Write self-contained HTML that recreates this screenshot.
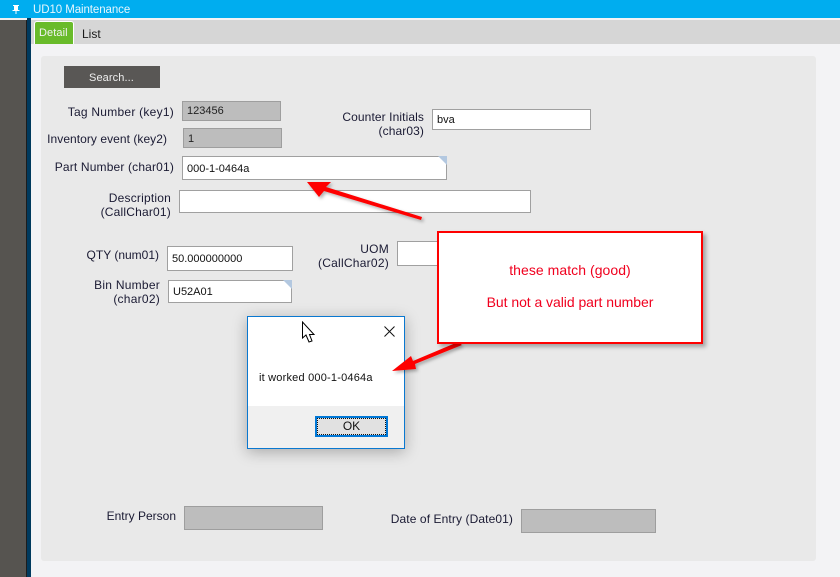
<!DOCTYPE html>
<html><head><meta charset="utf-8">
<style>
html,body{margin:0;padding:0}
body{width:840px;height:577px;overflow:hidden;position:relative;background:#f3f3f5;font-family:"Liberation Sans",Arial,sans-serif;font-size:12px;color:#1a1a33}
div{position:absolute;box-sizing:border-box}
.l{white-space:nowrap;text-align:right;line-height:14px;font-size:12px;letter-spacing:.16px}
.i{border:1px solid #a0a0a0;background:#fff;font-size:11px;line-height:20px;padding-left:4px;color:#111;white-space:nowrap}
.g{background:#bdbdbd;border:1px solid #9e9e9e}
.c{width:0;height:0;border-top:9px solid #b3c8e0;border-left:9px solid transparent;right:-1px;top:-1px}
</style></head><body>
<div style="left:0;top:0;width:840px;height:18px;background:#00adef"></div>
<div style="left:0;top:20px;width:26px;height:557px;background:#565450"></div>
<div style="left:0;top:18px;width:31px;height:2px;background:#f0f0f0"></div>
<div style="left:26px;top:20px;width:1px;height:557px;background:#1d1d1d"></div>
<div style="left:27px;top:18px;width:4px;height:559px;background:#003a5e"></div>
<svg style="position:absolute;left:12px;top:4px" width="8" height="10" viewBox="0 0 8 10"><path d="M1 1h6v1H6v4h1.500v1H4.500v3h-1V7H.5V6H2V2H1Z" fill="#fff"/></svg>
<div style="left:33px;top:2px;color:#e6f6fd;font-size:11.500px;line-height:14px;white-space:nowrap;letter-spacing:-.08px;padding-top:1px">UD10 Maintenance</div>
<div style="left:31px;top:20px;width:809px;height:24px;background:#d6d6d6"></div>
<div style="left:34px;top:21px;width:40px;height:23px;background:#69bb2a;border:1px solid #fff;border-bottom:none;border-radius:3px 3px 0 0"></div>
<div style="left:39px;top:26px;color:#f2f2f2;font-size:11px;line-height:14px;letter-spacing:.1px">Detail</div>
<div style="left:82px;top:27px;color:#1a1a1a;font-size:12px;line-height:14px">List</div>
<div style="left:41px;top:56px;width:775px;height:505px;background:#e9e9e9;border-radius:3px"></div>
<div style="left:64px;top:66px;width:96px;height:22px;background:#595755;color:#eee;font-size:11px;line-height:24px;text-align:center;letter-spacing:.1px;padding-right:1px">Search...</div>

<div class="l" style="left:40px;width:134px;top:105px;letter-spacing:.25px">Tag Number (key1)</div>
<div class="i g" style="left:182px;top:101px;width:99px;height:20px;line-height:19px;font-size:11px;color:#222">123456</div>
<div class="l" style="left:40px;width:127px;top:132px;letter-spacing:.05px">Inventory event (key2)</div>
<div class="i g" style="left:183px;top:128px;width:99px;height:20px;line-height:20px;color:#222">1</div>
<div class="l" style="left:40px;width:134px;top:160px">Part Number (char01)</div>
<div class="i" style="left:182px;top:156px;width:265px;height:24px;line-height:24px">000-1-0464a<div class="c"></div></div>
<div class="l" style="left:60px;width:111px;top:191px;letter-spacing:.2px">Description<br>(CallChar01)</div>
<div class="i" style="left:179px;top:190px;width:352px;height:23px"></div>
<div class="l" style="left:60px;width:99px;top:248px;letter-spacing:0">QTY (num01)</div>
<div class="i" style="left:167px;top:246px;width:126px;height:25px;line-height:25px">50.000000000</div>
<div class="l" style="left:60px;width:100px;top:278px;letter-spacing:.25px">Bin Number<br>(char02)</div>
<div class="i" style="left:168px;top:280px;width:124px;height:23px;line-height:23px">U52A01<div class="c"></div></div>
<div class="l" style="left:300px;width:124px;top:110px;letter-spacing:.1px">Counter Initials<br>(char03)</div>
<div class="i" style="left:432px;top:109px;width:159px;height:21px;line-height:21px">bva</div>
<div class="l" style="left:300px;width:89px;top:242px;letter-spacing:.25px">UOM<br>(CallChar02)</div>
<div class="i" style="left:397px;top:241px;width:50px;height:25px"></div>
<div class="l" style="left:90px;width:86px;top:509px;letter-spacing:0">Entry Person</div>
<div class="i g" style="left:184px;top:506px;width:139px;height:24px"></div>
<div class="l" style="left:380px;width:133px;top:512px;letter-spacing:.1px">Date of Entry (Date01)</div>
<div class="i g" style="left:521px;top:509px;width:135px;height:24px"></div>

<svg style="position:absolute;left:0;top:0" width="840" height="577">
<defs><filter id="s" x="-20%" y="-20%" width="140%" height="140%"><feDropShadow dx="2" dy="2" stdDeviation="1.500" flood-color="#000" flood-opacity=".3"/></filter></defs>
<g filter="url(#s)"><path d="M307 182L331 182L326 187L422 217L421 220L324 191L319 197Z" fill="#fe0000"/></g>
</svg>

<div style="left:247px;top:316px;width:158px;height:133px;background:#fff;border:1px solid #0a78d0;box-shadow:0 3px 14px rgba(0,0,0,.28)"></div>
<div style="left:248px;top:406px;width:156px;height:42px;background:#f0f0f0"></div>
<svg style="position:absolute;left:384px;top:326px" width="11" height="11"><path d="M.5 .5L10.500 10.500M10.500 .5L.5 10.500" stroke="#111" stroke-width="1" fill="none"/></svg>
<svg style="position:absolute;left:301px;top:321px" width="15" height="23" viewBox="0 0 15 23"><path d="M1.500 1V17L5 14L8 21L11 20L8.500 13.500H13Z" fill="#fff" stroke="#000" stroke-width="1"/></svg>
<div style="left:259px;top:371px;font-size:11px;line-height:14px;color:#111;white-space:nowrap;letter-spacing:.2px">it worked 000-1-0464a</div>
<div style="left:315px;top:416px;width:73px;height:21px;background:#e1e1e1;border:2px solid #0078d7;font-size:12px;line-height:17px;text-align:center;color:#111">OK<div style="left:0;top:0;right:0;bottom:0;border:1px dotted #111"></div></div>

<svg style="position:absolute;left:0;top:0" width="840" height="577">
<defs><filter id="t" x="-20%" y="-20%" width="140%" height="140%"><feDropShadow dx="2" dy="2" stdDeviation="1.500" flood-color="#000" flood-opacity=".3"/></filter></defs>
<g filter="url(#t)"><path d="M392 371L411 356L413 361L458 342L462 345L415 364L416 369Z" fill="#fe0000"/></g>
</svg>

<div style="left:437px;top:231px;width:266px;height:113px;background:#fff;border:2px solid #fe0000;box-shadow:3px 3px 4px rgba(0,0,0,.3)"></div>
<div style="left:437px;top:263px;width:266px;text-align:center;color:#f0001e;font-size:14px;line-height:14px;letter-spacing:.05px">these match (good)</div>
<div style="left:437px;top:295px;width:266px;text-align:center;color:#f0001e;font-size:14px;line-height:14px;letter-spacing:-.05px">But not a valid part number</div>
</body></html>
